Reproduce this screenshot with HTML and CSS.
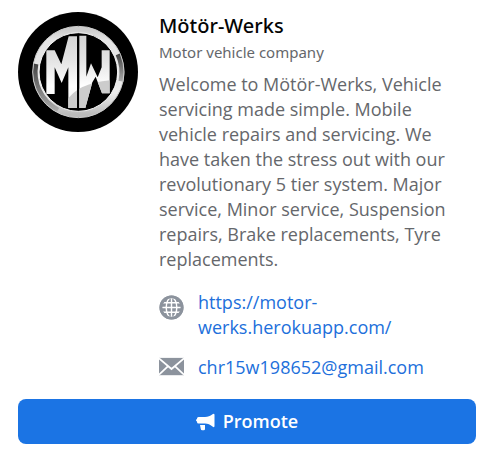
FILE: index.html
```html
<!DOCTYPE html>
<html lang="en">
<head>
<meta charset="utf-8">
<meta name="viewport" content="width=device-width, initial-scale=1">
<title>Mötör-Werks</title>
<link rel="stylesheet" href="styles.css">
</head>
<body>
<main class="card">
  <div class="profile">
    <svg class="logo" viewBox="24 24 360 360" role="img" aria-label="Mötör-Werks logo">
      <defs>
        <linearGradient id="ring" x1="0" y1="0" x2="0" y2="1">
          <stop offset="0" stop-color="#ccc"/>
          <stop offset=".12" stop-color="#e4e4e4"/>
          <stop offset=".5" stop-color="#e6e6e6"/>
          <stop offset=".75" stop-color="#eee"/>
          <stop offset="1" stop-color="#bbb"/>
        </linearGradient>
        <linearGradient id="dark" x1="0" y1="0" x2="0" y2="1">
          <stop offset="0" stop-color="#444"/>
          <stop offset="1" stop-color="#aaa"/>
        </linearGradient>
        <linearGradient id="steel" gradientUnits="userSpaceOnUse" x1="0" y1="95" x2="0" y2="312">
          <stop offset="0" stop-color="#d4d4d4"/>
          <stop offset=".35" stop-color="#e4e4e4"/>
          <stop offset=".7" stop-color="#fff"/>
          <stop offset="1" stop-color="#f2f2f2"/>
        </linearGradient>
        <clipPath id="mark">
          <path d="M109 139H134L154 181L176 97H201V312H175V190L155 237L134 190V270H109ZM208 95H229V218L243 178L263 220L275 190V139H299V268H276L257 218L247 235L226 312H208Z"/>
        </clipPath>
      </defs>
      <circle cx="204" cy="204" r="180" fill="#000"/>
      <circle cx="205" cy="204" r="127" fill="none" stroke="url(#ring)" stroke-width="19"/>
      <path d="M78 180A129 129 0 0 0 144 318" fill="none" stroke="url(#dark)" stroke-width="14"/>
      <path d="M324 151A131 131 0 0 1 333 232" fill="none" stroke="url(#dark)" stroke-width="15"/>
      <circle cx="205" cy="204" r="137" fill="none" stroke="#ccc" stroke-width="3"/>
      <circle cx="205" cy="204" r="118" fill="none" stroke="#f4f4f4" stroke-width="3"/>
      <path d="M109 139H134L154 181L176 97H201V312H175V190L155 237L134 190V270H109ZM208 95H229V218L243 178L263 220L275 190V139H299V268H276L257 218L247 235L226 312H208Z" fill="url(#steel)"/>
      <path clip-path="url(#mark)" d="M170 290Q205 235 305 228V315H170Z" fill="#ccc"/>
    </svg>
    <div class="details">
      <h1 class="name">Mötör-Werks</h1>
      <p class="category">Motor vehicle company</p>
      <p class="about">Welcome to Mötör-Werks, Vehicle servicing made simple. Mobile vehicle repairs and servicing. We have taken the stress out with our revolutionary 5 tier system. Major service, Minor service, Suspension repairs, Brake replacements, Tyre replacements.</p>
      <ul class="contacts">
        <li class="contact">
          <svg class="contact-icon globe" viewBox="0 0 26 26" aria-hidden="true">
            <circle cx="13" cy="13" r="12.500" fill="#8c939d"/>
            <g fill="none" stroke="#fff" stroke-width="1.500">
              <path d="M13 3V23M3 13H23M4 8H22M4 18H22"/>
              <ellipse cx="13" cy="13" rx="5.500" ry="10.500"/>
            </g>
            <circle cx="13" cy="13" r="11" fill="none" stroke="#8c939d" stroke-width="3"/>
          </svg>
          <a class="link" href="https://motor-werks.herokuapp.com/">https://motor-<wbr>werks.herokuapp.com/</a>
        </li>
        <li class="contact">
          <svg class="contact-icon" viewBox="0 0 26 26" aria-hidden="true">
            <path d="M0 3H26V21H0Z" fill="#8c939d"/>
            <path d="M0 3.500L13 14.500L26 3.500M0 20.500L9.500 11.500M26 20.500L16.500 11.500" fill="none" stroke="#fff" stroke-width="1.900"/>
          </svg>
          <a class="link" href="mailto:chr15w198652@gmail.com">chr15w198652@gmail.com</a>
        </li>
      </ul>
    </div>
  </div>
  <button class="promote" type="button">
    <svg class="promote-icon" viewBox="0 0 19 18" aria-hidden="true">
      <path d="M2.500 4H9C12 4 14 3 16.500 1.200Q18.500 0 18.500 2V13Q18.500 15 16.500 13.500C14 11.500 12 10.500 9 10.500H2.500Q1 10.500 1 9V8.500Q0 8.300 0 7.300Q0 6.200 1 6V5.500Q1 4 2.500 4ZM4 12H9V16Q9 17.300 7.700 17.300H6.200Q5 17.300 4.800 16Z" fill="#fff"/>
    </svg>
    <span>Promote</span>
  </button>
</main>
</body>
</html>
```
FILE: styles.css
```css
* {
  box-sizing: border-box;
}

body {
  margin: 0;
  background: #fff;
  color: #65676b;
  font-family: "Open Sans", "Noto Sans", sans-serif;
}

.card {
  padding: 12px 16px 16px 18px;
}

.profile {
  display: flex;
  align-items: flex-start;
  gap: 21px;
}

.logo {
  flex: none;
  width: 120px;
  height: 120px;
}

.details {
  flex: 1;
  min-width: 0;
  padding-right: 24px;
}

.name {
  margin: 0;
  color: #050505;
  font-family: "Noto Sans", sans-serif;
  font-size: 20px;
  font-weight: 500;
  line-height: 28px;
}

.category {
  margin: 0;
  font-family: "Noto Sans", sans-serif;
  font-size: 15px;
  line-height: 24px;
}

.about {
  margin: 8px 0 0;
  font-size: 18px;
  line-height: 25px;
}

.contacts {
  display: grid;
  gap: 15px;
  margin: 18px 0 0;
  padding: 0;
  list-style: none;
}

.contact {
  display: flex;
  gap: 14px;
  font-size: 18px;
  line-height: 25px;
}

.contact-icon {
  flex: none;
  width: 25px;
  height: 25px;
}

.globe {
  margin-top: 5px;
}

.link {
  color: #216fdb;
  text-decoration: none;
}

.promote {
  display: flex;
  align-items: center;
  justify-content: center;
  gap: 8px;
  width: 100%;
  margin-top: 19px;
  padding: 10px 16px;
  border: 0;
  border-radius: 8px;
  background: #1b74e4;
  color: #fff;
  font-family: inherit;
  font-size: 18px;
  font-weight: 600;
  line-height: 25px;
}

.promote-icon {
  width: 19px;
  height: 18px;
}
```
